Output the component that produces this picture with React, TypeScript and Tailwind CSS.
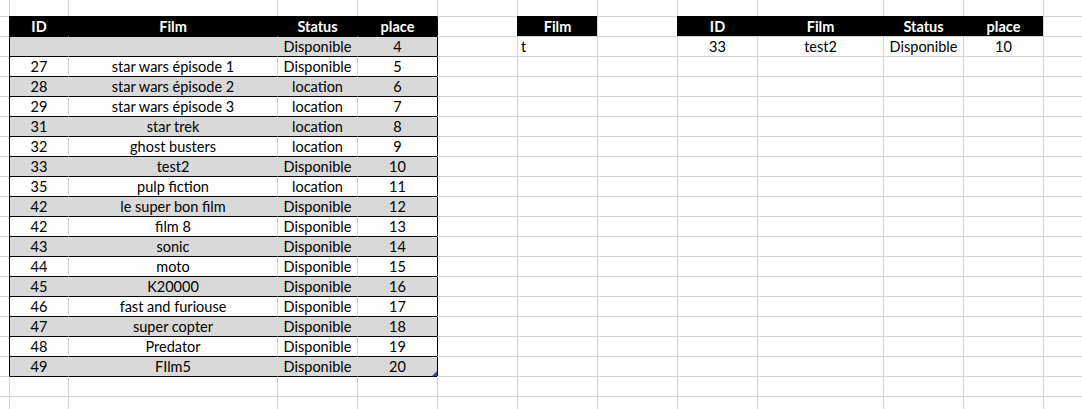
import React from "react";

type Fill = "none" | "gray" | "black";

const GRID = "border-l-[#d4d4d4]";

const mainRows: string[][] = [
  ["", "", "Disponible", "4"],
  ["27", "star wars épisode 1", "Disponible", "5"],
  ["28", "star wars épisode 2", "location", "6"],
  ["29", "star wars épisode 3", "location", "7"],
  ["31", "star trek", "location", "8"],
  ["32", "ghost busters", "location", "9"],
  ["33", "test2", "Disponible", "10"],
  ["35", "pulp fiction", "location", "11"],
  ["42", "le super bon film", "Disponible", "12"],
  ["42", "film 8", "Disponible", "13"],
  ["43", "sonic", "Disponible", "14"],
  ["44", "moto", "Disponible", "15"],
  ["45", "K20000", "Disponible", "16"],
  ["46", "fast and furiouse", "Disponible", "17"],
  ["47", "super copter", "Disponible", "18"],
  ["48", "Predator", "Disponible", "19"],
  ["49", "FIlm5", "Disponible", "20"],
];

type CellSpec = {
  text?: string;
  fill: Fill;
  left: "none" | "grid" | "black" | "gray";
  top: "none" | "grid" | "black";
  align?: "center" | "left";
  handle?: boolean;
};

const NCOLS = 13;
const NROWS = 21;

function buildCells(): CellSpec[][] {
  const rows: CellSpec[][] = [];
  for (let r = 0; r < NROWS; r++) {
    const row: CellSpec[] = [];
    for (let c = 0; c < NCOLS; c++) {
      row.push({
        fill: "none",
        left: c === 0 ? "none" : "grid",
        top: r === 0 ? "none" : "grid",
      });
    }
    rows.push(row);
  }
  // main table header
  const headers = ["ID", "Film", "Status", "place"];
  for (let i = 0; i < 4; i++) {
    rows[1][1 + i] = { text: headers[i], fill: "black", left: "black", top: "black" };
  }
  rows[1][5].left = "black";
  // main table data
  mainRows.forEach((d, i) => {
    const r = 2 + i;
    const gray = i % 2 === 0;
    for (let j = 0; j < 4; j++) {
      rows[r][1 + j] = {
        text: d[j],
        fill: gray ? "gray" : "none",
        left: j === 0 ? "black" : gray ? "gray" : "grid",
        top: "black",
      };
    }
    rows[r][5].left = "black";
  });
  rows[18][4].handle = true;
  for (let j = 1; j <= 4; j++) rows[19][j].top = "black";

  // middle film header
  rows[1][6] = { text: "Film", fill: "black", left: "black", top: "black" };
  rows[2][6] = { text: "t", fill: "none", left: "grid", top: "grid", align: "left" };

  // right table
  const rh = ["ID", "Film", "Status", "place"];
  const rd = ["33", "test2", "Disponible", "10"];
  for (let i = 0; i < 4; i++) {
    rows[1][8 + i] = { text: rh[i], fill: "black", left: "black", top: "black" };
    rows[2][8 + i] = { text: rd[i], fill: "none", left: "grid", top: "grid" };
  }
  return rows;
}

function leftClass(l: CellSpec["left"]) {
  switch (l) {
    case "none":
      return "";
    case "black":
      return "border-l border-l-black";
    case "gray":
      return "border-l border-l-[#d9d9d9]";
    default:
      return "border-l " + GRID;
  }
}

function topClass(t: CellSpec["top"]) {
  switch (t) {
    case "none":
      return "";
    case "black":
      return "border-t border-t-black";
    default:
      return "border-t border-t-[#d4d4d4]";
  }
}

function fillClass(f: Fill) {
  if (f === "black") return "bg-black text-white font-bold";
  if (f === "gray") return "bg-[#d9d9d9] text-black";
  return "bg-white text-black";
}

export default function App() {
  const cells = buildCells();
  return (
    <div
      className="w-[1082px] h-[409px] overflow-hidden bg-white"
      style={{ fontFamily: "Lato, 'Open Sans', sans-serif" }}
    >
      <div className="grid grid-cols-[9px_59px_209px_80px_80px_80px_80px_80px_80px_126px_80px_80px_39px] grid-rows-[16px_repeat(19,20px)_13px] text-[14.5px]">
        {cells.map((row, r) =>
          row.map((cell, c) => (
            <div
              key={`${r}-${c}`}
              className={`relative overflow-hidden whitespace-nowrap leading-[19px] ${leftClass(cell.left)} ${topClass(
                cell.top
              )} ${fillClass(cell.fill)} ${cell.align === "left" ? "text-left pl-[3px]" : "text-center"}`}
            >
              {cell.text}
              {cell.handle && (
                <svg
                  className="absolute right-0 bottom-0"
                  width="5"
                  height="5"
                  viewBox="0 0 5 5"
                >
                  <polygon points="5,0 5,5 0,5" fill="#2f4fb0" />
                </svg>
              )}
            </div>
          ))
        )}
      </div>
    </div>
  );
}
